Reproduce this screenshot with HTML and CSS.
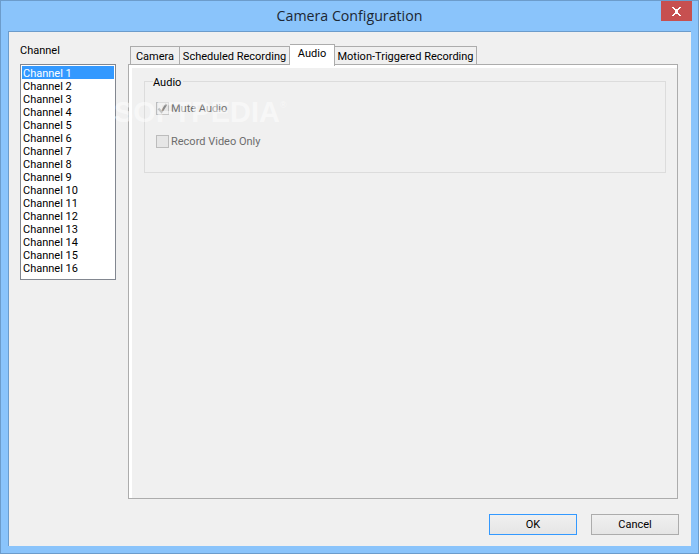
FILE: index.html
```html
<!DOCTYPE html>
<html lang="en">
<head>
<meta charset="utf-8">
<title>Camera Configuration</title>
<link rel="stylesheet" href="styles.css">
</head>
<body>
<div class="window">
  <header class="titlebar">
    <span></span>
    <h1 class="title">Camera Configuration</h1>
    <div class="caption">
      <button class="close" aria-label="Close">
        <svg width="11" height="9" viewBox="0 0 11 9"><path d="M1 0h2v1h1v1h3V1h1V0h2v1H9v1H8v1H7v3h1v1h1v1h1v1H8V8H7V7H4v1H3v1H1V8h1V7h1V6h1V3H3V2H2V1H1z" fill="#fff"/></svg>
      </button>
    </div>
  </header>
  <div class="client">
    <div class="main">
      <aside class="channels">
        <div class="channels-label">Channel</div>
        <ul class="listbox">
          <li class="selected">Channel 1</li>
          <li>Channel 2</li>
          <li>Channel 3</li>
          <li>Channel 4</li>
          <li>Channel 5</li>
          <li>Channel 6</li>
          <li>Channel 7</li>
          <li>Channel 8</li>
          <li>Channel 9</li>
          <li>Channel 10</li>
          <li>Channel 11</li>
          <li>Channel 12</li>
          <li>Channel 13</li>
          <li>Channel 14</li>
          <li>Channel 15</li>
          <li>Channel 16</li>
        </ul>
      </aside>
      <section class="tabs">
        <div class="tabstrip">
          <div class="tab tab-camera">Camera</div>
          <div class="tab tab-sched">Scheduled Recording</div>
          <div class="tab tab-audio active">Audio</div>
          <div class="tab tab-motion">Motion-Triggered Recording</div>
        </div>
        <div class="panel">
          <fieldset class="group">
            <legend>Audio</legend>
            <label class="check first">
              <span class="box"><svg width="11" height="11" viewBox="0 0 11 11"><path d="M1.5 5.5l3 3.5 5-8" fill="none" stroke="#8a8a8a" stroke-width="2.2"/></svg></span>
              <span>Mute Audio</span>
            </label>
            <label class="check">
              <span class="box"></span>
              <span>Record Video Only</span>
            </label>
          </fieldset>
        </div>
      </section>
    </div>
    <footer class="footer">
      <button class="btn default">OK</button>
      <button class="btn">Cancel</button>
    </footer>
    <div class="watermark">SOFTPEDIA<sup>®</sup></div>
  </div>
</div>
</body>
</html>
```
FILE: styles.css
```css
* { box-sizing: border-box; }
html, body { margin: 0; padding: 0; }
body {
  width: 699px;
  height: 554px;
  overflow: hidden;
  font-family: Roboto, "Noto Sans", sans-serif;
  font-size: 11px;
  color: #000;
}
.window {
  width: 699px;
  height: 554px;
  background: #8ac4fb;
  border: 1px solid #6c9ccb;
  padding: 0 7px 7px;
  display: flex;
  flex-direction: column;
}
.titlebar {
  height: 30px;
  flex: none;
  display: grid;
  grid-template-columns: 1fr auto 1fr;
}
.title {
  margin: 0;
  font-family: "Open Sans", "Noto Sans", sans-serif;
  font-weight: 400;
  font-size: 14.2px;
  line-height: 30px;
  color: #1c2733;
}
.caption { display: flex; justify-content: flex-end; }
.close {
  width: 31px;
  height: 20px;
  margin-right: -1px;
  padding: 0;
  border: 0;
  background: #c75050;
  display: flex;
  align-items: center;
  justify-content: center;
}
.client {
  position: relative;
  flex: 1;
  background: #f0f0f0;
  border: 1px solid #6c9ccb;
  border-width: 1px 0 0 1px;
  display: flex;
  flex-direction: column;
  padding: 11px 13px 11px 11px;
}
.main { display: flex; flex: 1; gap: 12px; }
.channels { width: 96px; flex: none; }
.channels-label { height: 21px; line-height: 16px; }
.listbox {
  list-style: none;
  margin: 0;
  padding: 1px;
  height: 216px;
  background: #fff;
  border: 1px solid #828790;
}
.listbox li { height: 13px; line-height: 15px; padding-left: 1px; }
.listbox li.selected { background: #3399ff; color: #fff; }
.tabs { flex: 1; display: flex; flex-direction: column; min-width: 0; }
.tabstrip {
  height: 22px;
  flex: none;
  padding-left: 2px;
  display: flex;
  align-items: flex-end;
  position: relative;
  z-index: 1;
}
.tab {
  height: 19px;
  background: #f0f0f0;
  border: 1px solid #acacac;
  border-left-width: 0;
  text-align: center;
  line-height: 20px;
  white-space: nowrap;
}
.tab-camera { width: 50px; border-left-width: 1px; }
.tab-sched { width: 110px; }
.tab-audio {
  width: 45px;
  height: 22px;
  margin-bottom: -1px;
  background: #fff;
  border-bottom: 0;
  line-height: 18px;
}
.tab-motion { width: 142px; }
.panel {
  flex: 1;
  margin-top: -1px;
  background: #f0f0f0;
  border: 1px solid #acacac;
  box-shadow: inset 3px 3px 0 #fff;
  padding: 9px 11px 0 15px;
}
.group {
  margin: 0;
  padding: 12px 0 0 11px;
  height: 99px;
  border: 1px solid #dcdcdc;
}
.group legend {
  padding: 2px 2px 0 0;
  margin-left: -3px;
  line-height: 13px;
}
.check {
  display: flex;
  align-items: center;
  gap: 2px;
  height: 14px;
  color: #6d6d6d;
}
.check.first { margin-bottom: 19px; }
.box {
  width: 13px;
  height: 13px;
  background: #e6e6e6;
  border: 1px solid #bcbcbc;
  display: flex;
  align-items: center;
  justify-content: center;
}
.footer {
  flex: none;
  height: 36px;
  padding-top: 15px;
  display: flex;
  justify-content: flex-end;
  gap: 14px;
  margin-right: -1px;
}
.btn {
  width: 88px;
  height: 21px;
  padding: 0;
  font: inherit;
  color: #000;
  border: 1px solid #acacac;
  background: linear-gradient(#f0f0f0, #e5e5e5);
}
.btn.default { border-color: #3399ff; }
.watermark {
  position: absolute;
  left: 105px;
  top: 64px;
  font-family: "Liberation Sans", sans-serif;
  font-weight: 700;
  font-size: 29px;
  color: rgba(255, 255, 255, 0.5);
  pointer-events: none;
  white-space: nowrap;
}
.watermark sup { font-size: 9px; font-weight: 400; vertical-align: 14px; line-height: 0; }
```
